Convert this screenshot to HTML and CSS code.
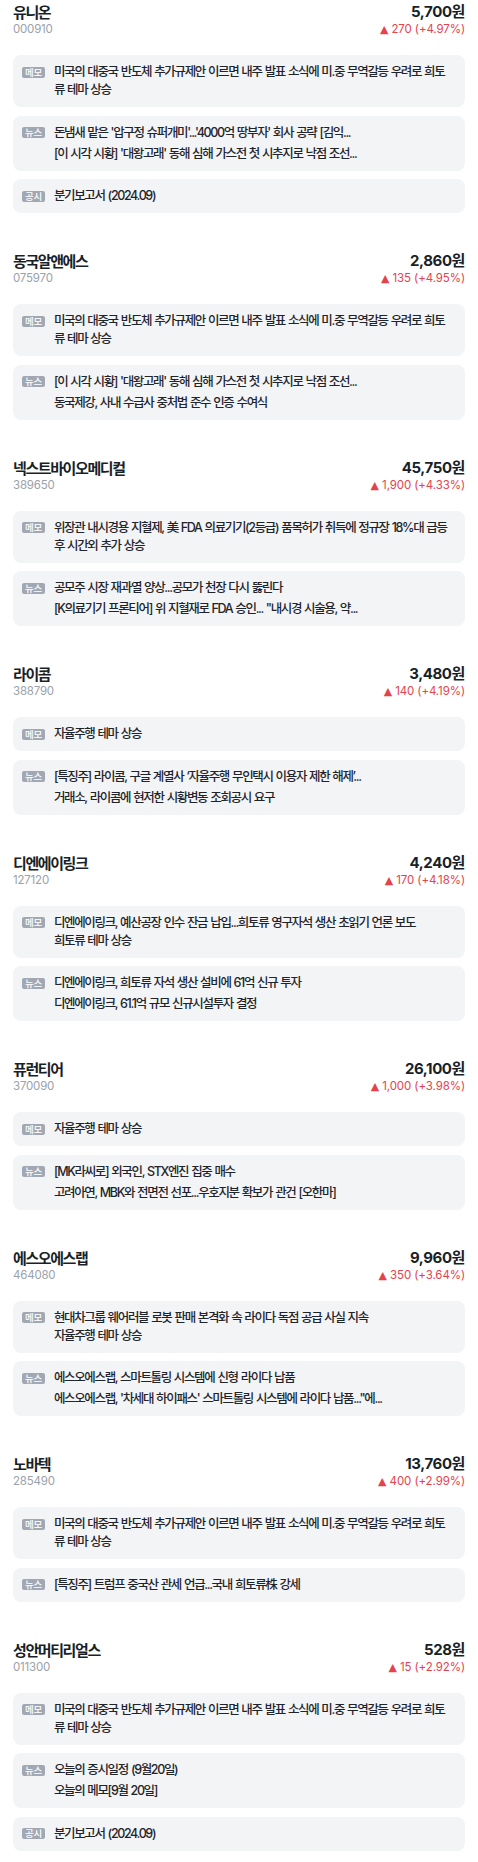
FILE: index.html
```html
<!DOCTYPE html>
<html lang="ko">
<head>
<meta charset="utf-8">
<title>관심 종목</title>
<link rel="stylesheet" href="styles.css">
</head>
<body>
<main class="list">

  <section class="stock">
    <div class="head">
      <div class="id"><div class="name">유니온</div><div class="code">000910</div></div>
      <div class="quote"><div class="price">5,700원</div><div class="change"><span class="tri">▲</span> 270 (+4.97%)</div></div>
    </div>
    <div class="cards">
      <div class="card"><span class="badge">메모</span><div class="body"><p>미국의 대중국 반도체 추가규제안 이르면 내주 발표 소식에 미.중 무역갈등 우려로 희토류 테마 상승</p></div></div>
      <div class="card"><span class="badge">뉴스</span><div class="body news"><p>돈냄새 맡은 '압구정 슈퍼개미'...'4000억 땅부자' 회사 공략 [김익...</p><p>[이 시각 시황] '대왕고래' 동해 심해 가스전 첫 시추지로 낙점 조선...</p></div></div>
      <div class="card"><span class="badge">공시</span><div class="body"><p>분기보고서 (2024.09)</p></div></div>
    </div>
  </section>

  <section class="stock">
    <div class="head">
      <div class="id"><div class="name">동국알앤에스</div><div class="code">075970</div></div>
      <div class="quote"><div class="price">2,860원</div><div class="change"><span class="tri">▲</span> 135 (+4.95%)</div></div>
    </div>
    <div class="cards">
      <div class="card"><span class="badge">메모</span><div class="body"><p>미국의 대중국 반도체 추가규제안 이르면 내주 발표 소식에 미.중 무역갈등 우려로 희토류 테마 상승</p></div></div>
      <div class="card"><span class="badge">뉴스</span><div class="body news"><p>[이 시각 시황] '대왕고래' 동해 심해 가스전 첫 시추지로 낙점 조선...</p><p>동국제강, 사내 수급사 중처법 준수 인증 수여식</p></div></div>
    </div>
  </section>

  <section class="stock">
    <div class="head">
      <div class="id"><div class="name">넥스트바이오메디컬</div><div class="code">389650</div></div>
      <div class="quote"><div class="price">45,750원</div><div class="change"><span class="tri">▲</span> 1,900 (+4.33%)</div></div>
    </div>
    <div class="cards">
      <div class="card"><span class="badge">메모</span><div class="body"><p>위장관 내시경용 지혈제, 美 FDA 의료기기(2등급) 품목허가 취득에 정규장 18%대 급등 후 시간외 추가 상승</p></div></div>
      <div class="card"><span class="badge">뉴스</span><div class="body news"><p>공모주 시장 재과열 양상...공모가 천장 다시 뚫린다</p><p>[K의료기기 프론티어] 위 지혈재로 FDA 승인... "내시경 시술용, 약...</p></div></div>
    </div>
  </section>

  <section class="stock">
    <div class="head">
      <div class="id"><div class="name">라이콤</div><div class="code">388790</div></div>
      <div class="quote"><div class="price">3,480원</div><div class="change"><span class="tri">▲</span> 140 (+4.19%)</div></div>
    </div>
    <div class="cards">
      <div class="card"><span class="badge">메모</span><div class="body"><p>자율주행 테마 상승</p></div></div>
      <div class="card"><span class="badge">뉴스</span><div class="body news"><p>[특징주] 라이콤, 구글 계열사 ‘자율주행 무인택시 이용자 제한 해제’...</p><p>거래소, 라이콤에 현저한 시황변동 조회공시 요구</p></div></div>
    </div>
  </section>

  <section class="stock">
    <div class="head">
      <div class="id"><div class="name">디엔에이링크</div><div class="code">127120</div></div>
      <div class="quote"><div class="price">4,240원</div><div class="change"><span class="tri">▲</span> 170 (+4.18%)</div></div>
    </div>
    <div class="cards">
      <div class="card"><span class="badge">메모</span><div class="body"><p>디엔에이링크, 예산공장 인수 잔금 납입...희토류 영구자석 생산 초읽기 언론 보도<br>희토류 테마 상승</p></div></div>
      <div class="card"><span class="badge">뉴스</span><div class="body news"><p>디엔에이링크, 희토류 자석 생산 설비에 61억 신규 투자</p><p>디엔에이링크, 61.1억 규모 신규시설투자 결정</p></div></div>
    </div>
  </section>

  <section class="stock">
    <div class="head">
      <div class="id"><div class="name">퓨런티어</div><div class="code">370090</div></div>
      <div class="quote"><div class="price">26,100원</div><div class="change"><span class="tri">▲</span> 1,000 (+3.98%)</div></div>
    </div>
    <div class="cards">
      <div class="card"><span class="badge">메모</span><div class="body"><p>자율주행 테마 상승</p></div></div>
      <div class="card"><span class="badge">뉴스</span><div class="body news"><p>[MK라씨로] 외국인, STX엔진 집중 매수</p><p>고려아연, MBK와 전면전 선포...우호지분 확보가 관건 [오한마]</p></div></div>
    </div>
  </section>

  <section class="stock">
    <div class="head">
      <div class="id"><div class="name">에스오에스랩</div><div class="code">464080</div></div>
      <div class="quote"><div class="price">9,960원</div><div class="change"><span class="tri">▲</span> 350 (+3.64%)</div></div>
    </div>
    <div class="cards">
      <div class="card"><span class="badge">메모</span><div class="body"><p>현대차그룹 웨어러블 로봇 판매 본격화 속 라이다 독점 공급 사실 지속<br>자율주행 테마 상승</p></div></div>
      <div class="card"><span class="badge">뉴스</span><div class="body news"><p>에스오에스랩, 스마트톨링 시스템에 신형 라이다 납품</p><p>에스오에스랩, '차세대 하이패스' 스마트톨링 시스템에 라이다 납품..."에...</p></div></div>
    </div>
  </section>

  <section class="stock">
    <div class="head">
      <div class="id"><div class="name">노바텍</div><div class="code">285490</div></div>
      <div class="quote"><div class="price">13,760원</div><div class="change"><span class="tri">▲</span> 400 (+2.99%)</div></div>
    </div>
    <div class="cards">
      <div class="card"><span class="badge">메모</span><div class="body"><p>미국의 대중국 반도체 추가규제안 이르면 내주 발표 소식에 미.중 무역갈등 우려로 희토류 테마 상승</p></div></div>
      <div class="card"><span class="badge">뉴스</span><div class="body news"><p>[특징주] 트럼프 중국산 관세 언급...국내 희토류株 강세</p></div></div>
    </div>
  </section>

  <section class="stock">
    <div class="head">
      <div class="id"><div class="name">성안머티리얼스</div><div class="code">011300</div></div>
      <div class="quote"><div class="price">528원</div><div class="change"><span class="tri">▲</span> 15 (+2.92%)</div></div>
    </div>
    <div class="cards">
      <div class="card"><span class="badge">메모</span><div class="body"><p>미국의 대중국 반도체 추가규제안 이르면 내주 발표 소식에 미.중 무역갈등 우려로 희토류 테마 상승</p></div></div>
      <div class="card"><span class="badge">뉴스</span><div class="body news"><p>오늘의 증시일정 (9월20일)</p><p>오늘의 메모[9월 20일]</p></div></div>
      <div class="card"><span class="badge">공시</span><div class="body"><p>분기보고서 (2024.09)</p></div></div>
    </div>
  </section>

</main>
</body>
</html>
```

FILE: styles.css
```css
html, body {
  margin: 0;
  padding: 0;
  background: #ffffff;
}

body {
  font-family: "Inter", "Noto Sans CJK KR", sans-serif;
  color: #191f28;
}

.list {
  display: flex;
  flex-direction: column;
}

.stock {
  padding: 18px 13px 20px;
}

.stock:first-child {
  padding-top: 2px;
}

.head {
  display: flex;
  justify-content: space-between;
  align-items: flex-start;
}

.name {
  font-family: "Noto Sans CJK KR", sans-serif;
  font-size: 15px;
  font-weight: 700;
  line-height: 20px;
  letter-spacing: -1.4px;
  color: #191f28;
}

.code {
  font-size: 11.5px;
  line-height: 14px;
  letter-spacing: -0.2px;
  color: #9ba1aa;
}

.quote {
  text-align: right;
}

.price {
  font-size: 15px;
  font-weight: 700;
  line-height: 20px;
  letter-spacing: -0.4px;
  color: #191f28;
}

.change {
  font-size: 11.5px;
  line-height: 14px;
  letter-spacing: -0.1px;
  color: #e5424d;
}

.tri {
  font-family: "DejaVu Sans", sans-serif;
  font-size: 11px;
}

.cards {
  display: flex;
  flex-direction: column;
  gap: 8.5px;
  margin-top: 18px;
}

.card {
  display: flex;
  align-items: flex-start;
  gap: 9px;
  padding: 8px 12px 8px 9px;
  background: #f3f4f6;
  border-radius: 8px;
}

.badge {
  flex: none;
  margin-top: 3.5px;
  padding: 0 3px;
  height: 11px;
  line-height: 11px;
  border-radius: 2px;
  background: #a1a8b4;
  color: #ffffff;
  font-family: "Noto Sans CJK KR", sans-serif;
  font-size: 9.5px;
  font-weight: 500;
  letter-spacing: -0.3px;
}

.body {
  flex: 1;
  min-width: 0;
  font-size: 12.5px;
  font-weight: 500;
  line-height: 18px;
  letter-spacing: -1.35px;
  word-spacing: 1px;
  color: #1f242b;
}

.body p {
  margin: 0;
}

.news {
  display: flex;
  flex-direction: column;
  gap: 3px;
}
```
